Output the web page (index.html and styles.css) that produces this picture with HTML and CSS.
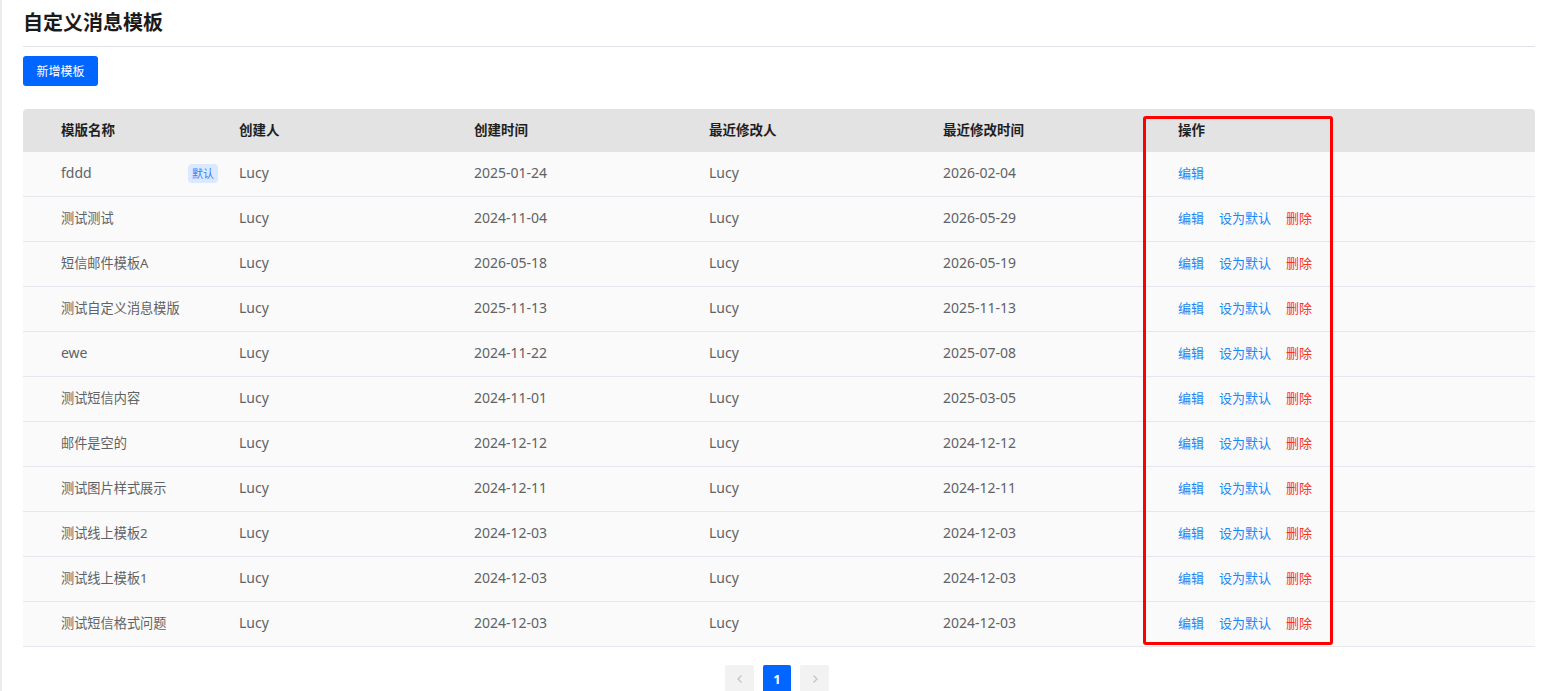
FILE: index.html
```html
<!DOCTYPE html>
<html lang="zh-CN">
<head>
<meta charset="UTF-8">
<title>自定义消息模板</title>
<link rel="stylesheet" href="styles.css">
</head>
<body>

<div class="page">
  <h1 class="page-title">自定义消息模板</h1>
  <button class="btn-primary">新增模板</button>

  <div class="table-wrap">
    <div class="row head">
      <div></div>
      <div class="cell">模版名称</div>
      <div class="cell">创建人</div>
      <div class="cell">创建时间</div>
      <div class="cell">最近修改人</div>
      <div class="cell">最近修改时间</div>
      <div class="cell">操作</div>
    </div>

    <div class="row">
      <div></div>
      <div class="cell name">fddd <span class="tag">默认</span></div>
      <div class="cell">Lucy</div>
      <div class="cell">2025-01-24</div>
      <div class="cell">Lucy</div>
      <div class="cell">2026-02-04</div>
      <div class="cell actions"><a href="#">编辑</a></div>
    </div>
    <div class="row">
      <div></div>
      <div class="cell zh">测试测试</div>
      <div class="cell">Lucy</div>
      <div class="cell">2024-11-04</div>
      <div class="cell">Lucy</div>
      <div class="cell">2026-05-29</div>
      <div class="cell actions"><a href="#">编辑</a><a href="#">设为默认</a><a href="#" class="danger">删除</a></div>
    </div>
    <div class="row">
      <div></div>
      <div class="cell zh">短信邮件模板A</div>
      <div class="cell">Lucy</div>
      <div class="cell">2026-05-18</div>
      <div class="cell">Lucy</div>
      <div class="cell">2026-05-19</div>
      <div class="cell actions"><a href="#">编辑</a><a href="#">设为默认</a><a href="#" class="danger">删除</a></div>
    </div>
    <div class="row">
      <div></div>
      <div class="cell zh">测试自定义消息模版</div>
      <div class="cell">Lucy</div>
      <div class="cell">2025-11-13</div>
      <div class="cell">Lucy</div>
      <div class="cell">2025-11-13</div>
      <div class="cell actions"><a href="#">编辑</a><a href="#">设为默认</a><a href="#" class="danger">删除</a></div>
    </div>
    <div class="row">
      <div></div>
      <div class="cell">ewe</div>
      <div class="cell">Lucy</div>
      <div class="cell">2024-11-22</div>
      <div class="cell">Lucy</div>
      <div class="cell">2025-07-08</div>
      <div class="cell actions"><a href="#">编辑</a><a href="#">设为默认</a><a href="#" class="danger">删除</a></div>
    </div>
    <div class="row">
      <div></div>
      <div class="cell zh">测试短信内容</div>
      <div class="cell">Lucy</div>
      <div class="cell">2024-11-01</div>
      <div class="cell">Lucy</div>
      <div class="cell">2025-03-05</div>
      <div class="cell actions"><a href="#">编辑</a><a href="#">设为默认</a><a href="#" class="danger">删除</a></div>
    </div>
    <div class="row">
      <div></div>
      <div class="cell zh">邮件是空的</div>
      <div class="cell">Lucy</div>
      <div class="cell">2024-12-12</div>
      <div class="cell">Lucy</div>
      <div class="cell">2024-12-12</div>
      <div class="cell actions"><a href="#">编辑</a><a href="#">设为默认</a><a href="#" class="danger">删除</a></div>
    </div>
    <div class="row">
      <div></div>
      <div class="cell zh">测试图片样式展示</div>
      <div class="cell">Lucy</div>
      <div class="cell">2024-12-11</div>
      <div class="cell">Lucy</div>
      <div class="cell">2024-12-11</div>
      <div class="cell actions"><a href="#">编辑</a><a href="#">设为默认</a><a href="#" class="danger">删除</a></div>
    </div>
    <div class="row">
      <div></div>
      <div class="cell zh">测试线上模板2</div>
      <div class="cell">Lucy</div>
      <div class="cell">2024-12-03</div>
      <div class="cell">Lucy</div>
      <div class="cell">2024-12-03</div>
      <div class="cell actions"><a href="#">编辑</a><a href="#">设为默认</a><a href="#" class="danger">删除</a></div>
    </div>
    <div class="row">
      <div></div>
      <div class="cell zh">测试线上模板1</div>
      <div class="cell">Lucy</div>
      <div class="cell">2024-12-03</div>
      <div class="cell">Lucy</div>
      <div class="cell">2024-12-03</div>
      <div class="cell actions"><a href="#">编辑</a><a href="#">设为默认</a><a href="#" class="danger">删除</a></div>
    </div>
    <div class="row">
      <div></div>
      <div class="cell zh">测试短信格式问题</div>
      <div class="cell">Lucy</div>
      <div class="cell">2024-12-03</div>
      <div class="cell">Lucy</div>
      <div class="cell">2024-12-03</div>
      <div class="cell actions"><a href="#">编辑</a><a href="#">设为默认</a><a href="#" class="danger">删除</a></div>
    </div>

    <!-- highlight around the action column -->
    <div class="highlight"></div>
  </div>

  <div class="pager">
    <button class="pager-btn" disabled>
      <svg width="10" height="10" viewBox="0 0 10 10"><path d="M6.5 1.5 3 5l3.5 3.5" fill="none" stroke="currentColor" stroke-width="1.3"/></svg>
    </button>
    <button class="pager-btn current">1</button>
    <button class="pager-btn" disabled>
      <svg width="10" height="10" viewBox="0 0 10 10"><path d="M3.5 1.5 7 5 3.5 8.5" fill="none" stroke="currentColor" stroke-width="1.3"/></svg>
    </button>
  </div>
</div>

</body>
</html>
```

FILE: styles.css
```css
body {
  margin: 0;
  font-family: "Noto Sans", "Noto Sans CJK SC", sans-serif;
  background: #fff;
  color: #606266;
}

.page {
  border-left: 2px solid #ececec;
  padding: 9px 6px 0 21px;
  min-height: 100vh;
  box-sizing: border-box;
}

.page-title {
  margin: 0;
  font-size: 20px;
  line-height: 28px;
  font-weight: 700;
  color: #1a1a1a;
  padding-bottom: 9px;
  border-bottom: 1px solid #e1e3ea;
}

.btn-primary {
  display: block;
  margin-top: 9px;
  height: 30px;
  width: 75px;
  padding: 0;
  border: none;
  border-radius: 3px;
  background: #0066ff;
  color: #fff;
  font-family: inherit;
  font-size: 12px;
  cursor: pointer;
}

.table-wrap {
  position: relative;
  margin-top: 23px;
}

.row {
  display: grid;
  grid-template-columns: 24px 178px 235px 235px 234px 235px 1fr;
  height: 44px;
  align-items: center;
  background: #fafafa;
  border-bottom: 1px solid #e4e7ee;
  font-size: 14px;
}

.row.head {
  height: 43px;
  background: #e3e3e3;
  border-bottom: none;
  border-radius: 4px 4px 0 0;
  color: #1f1f1f;
  font-size: 13.5px;
  font-weight: 700;
}

.cell {
  padding-left: 14px;
  white-space: nowrap;
  line-height: 20px;
  padding-bottom: 2px;
}

/* chinese names render a bit narrower in the original font */
.cell.zh {
  font-size: 13.2px;
}

.cell.name {
  display: flex;
  align-items: center;
  justify-content: space-between;
  padding-right: 7px;
}

.tag {
  display: inline-block;
  height: 19px;
  line-height: 19px;
  padding: 0 4px;
  border-radius: 4px;
  background: #dbe9fe;
  color: #3b7ff6;
  font-size: 11px;
}

.actions {
  display: flex;
  gap: 15px;
  font-size: 13px;
}

.actions a {
  color: #1a88f5;
  text-decoration: none;
}

.actions a.danger {
  color: #f5331f;
}

.highlight {
  position: absolute;
  left: 1120px;
  top: 7px;
  width: 184px;
  height: 523px;
  border: 3px solid #ff0000;
  border-radius: 3px;
  pointer-events: none;
}

.pager {
  display: flex;
  justify-content: center;
  gap: 9px;
  margin-top: 18px;
  padding-right: 4px;
}

.pager-btn {
  width: 29px;
  height: 28px;
  padding: 0;
  border: none;
  border-radius: 2px;
  background: #f2f2f2;
  color: #c4c4c4;
  font-family: inherit;
  font-size: 13px;
  font-weight: 700;
  display: flex;
  align-items: center;
  justify-content: center;
}

.pager-btn.current {
  width: 28px;
  background: #0066ff;
  color: #fff;
}
```
